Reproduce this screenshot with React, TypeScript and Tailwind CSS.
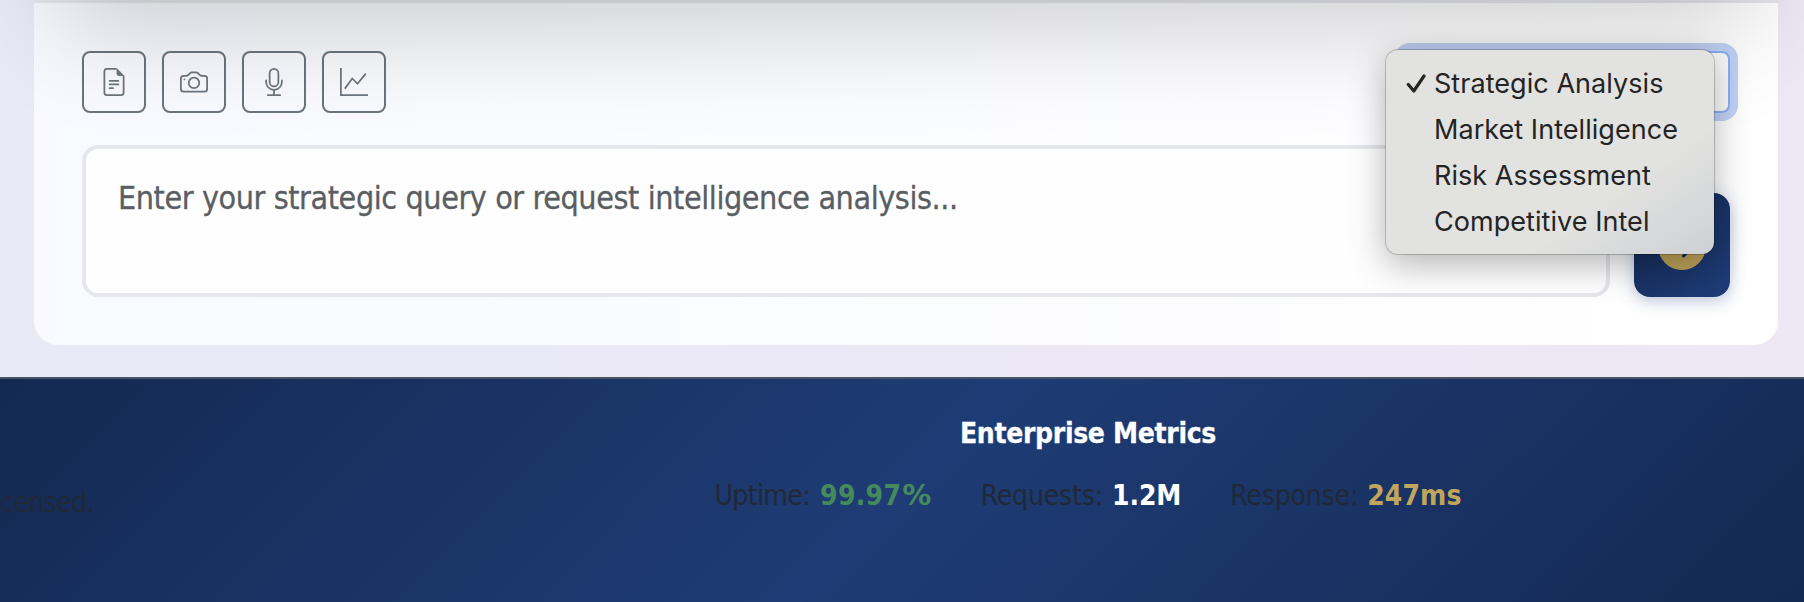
import React from "react";
import { BsCamera, BsMic, BsGraphUp } from "react-icons/bs";

const FileIcon = () => (
  <svg width="28" height="28" viewBox="0 0 16 16" fill="currentColor">
    <path fillRule="evenodd" d="M4 0h5.5v1H4a1 1 0 0 0-1 1v12a1 1 0 0 0 1 1h8a1 1 0 0 0 1-1V4.5h1V14a2 2 0 0 1-2 2H4a2 2 0 0 1-2-2V2a2 2 0 0 1 2-2z" />
    <path d="M9.5 3V0L14 4.5h-3A1.5 1.5 0 0 1 9.5 3z" />
    <path d="M5 11.500a.5.5 0 0 1 .5-.5h2a.5.5 0 0 1 0 1h-2a.5.5 0 0 1-.5-.5zm0-2.100a.5.5 0 0 1 .5-.5h5a.5.5 0 0 1 0 1h-5a.5.5 0 0 1-.5-.5zm0-2a.5.5 0 0 1 .5-.5h5a.5.5 0 0 1 0 1h-5a.5.5 0 0 1-.5-.5z" />
  </svg>
);

const tools = [
  { name: "document", icon: <FileIcon /> },
  { name: "camera", icon: <BsCamera size={28} /> },
  { name: "voice", icon: <BsMic size={28} /> },
  { name: "chart", icon: <BsGraphUp size={28} /> },
];

const options = ["Strategic Analysis", "Market Intelligence", "Risk Assessment", "Competitive Intel"];

export default function App() {
  return (
    <div className="relative flex h-[602px] w-[1804px] flex-col overflow-hidden bg-linear-to-r from-[#e8eaf6] to-[#eee7f4] font-['DejaVu_Sans_Condensed','DejaVu_Sans',sans-serif]">
      <main className="h-[377px] shrink-0 pr-[26px] pb-8 pl-[34px]">
        <section className="flex h-[345px] flex-col rounded-b-[24px] border-t-[3px] border-[#e5e7eb] bg-linear-to-r from-[#f9faff] to-white px-12 pt-12">
          <div className="flex justify-between">
            <div className="flex gap-4">
              {tools.map((t) => (
                <button key={t.name} className="flex h-[62px] w-16 items-center justify-center rounded-lg border-2 border-[#6c757d] text-[#6c757d]">
                  {t.icon}
                </button>
              ))}
            </div>
            <div className="h-[62px] w-[328px] rounded-lg border-2 border-[#8cb4f8] bg-white shadow-[0_0_0_8px_#c3d4f9]" />
          </div>
          <div className="mt-8 flex h-[152px] items-end gap-6">
            <div className="h-[152px] w-[1528px] rounded-2xl border-4 border-[#e5e7eb] bg-[#fefefe] px-8 pt-[29px] text-[32px] leading-[40px] tracking-[-0.42px] text-[#5a5e63] [-webkit-text-stroke:0.3px_#5a5e63]">
              <span className="whitespace-nowrap">Enter your strategic query or request intelligence analysis...</span>
            </div>
            <button className="flex h-[104px] w-24 items-center justify-center rounded-2xl bg-linear-135 from-[#142952] to-[#1e3d7a] pt-px shadow-[0_4px_16px_rgba(30,58,122,0.3)]">
              <span className="flex size-12 items-center justify-center rounded-full bg-[#bda258] text-[#142952]">
                <svg width="28" height="28" viewBox="0 0 28 28" fill="none" stroke="currentColor" strokeWidth="3" strokeLinecap="round" strokeLinejoin="round">
                  <path d="M3 14H25M15.500 4L25 14L15.500 24" />
                </svg>
              </span>
            </button>
          </div>
        </section>
      </main>
      <footer className="flex h-[225px] shrink-0 border-t-2 border-[#495464] bg-[linear-gradient(135deg,#142952_0%,#1e3c75_50%,#142952_100%)] text-[28px] leading-[40px] text-[#1f2937]">
        <p className="w-[713px] shrink-0 pt-[104px] tracking-[-0.5px]">censed.</p>
        <div className="flex w-[750px] flex-col items-center">
          <h2 className="mt-[35px] font-bold tracking-[-0.32px] text-white [-webkit-text-stroke:0.3px_white]">Enterprise Metrics</h2>
          <div className="mt-[22px] flex gap-[49px] tracking-[-0.15px] whitespace-nowrap">
            <div className="flex gap-[10px]">
              <span className="tracking-[-0.6px]">Uptime:</span>
              <b className="tracking-[0.3px] text-[#46895c]">99.97<span className="ml-px font-['DejaVu_Sans',sans-serif] text-[29px] leading-none">%</span></b>
            </div>
            <div className="flex gap-[9px]">
              <span>Requests:</span>
              <b className="text-white">1.2M</b>
            </div>
            <div className="flex gap-[9px]">
              <span>Response:</span>
              <b className="tracking-[0.1px] text-[#c0a55d]">247ms</b>
            </div>
          </div>
        </div>
      </footer>
      <div className="pointer-events-none absolute top-[-400px] left-[34px] h-[400px] w-[1744px] shadow-[0_53px_100px_-24px_rgba(0,0,0,0.19)]" />
      <ul className="absolute top-[50px] left-[1386px] h-[204px] w-[328px] rounded-xl bg-[#e2e2e0] bg-[linear-gradient(145deg,transparent_70%,#cdd0d4_100%)] pt-[11px] font-['Inter',sans-serif] text-[27px] tracking-[0.05px] text-[#242424] shadow-[0_0_0_1px_rgba(0,0,0,0.2),0_10px_36px_rgba(0,0,0,0.3)]">
        {options.map((label, i) => (
          <li key={label} className="flex h-[46px] items-center pl-[20px]">
            <span className="w-[28px]">
              {i === 0 && (
                <svg width="20" height="20" viewBox="0 0 20 20" fill="none" stroke="currentColor" strokeWidth="3.2" strokeLinecap="round" strokeLinejoin="round">
                  <path d="M2.300 10.500L7.800 17L18 2" />
                </svg>
              )}
            </span>
            <span className="whitespace-nowrap">{label}</span>
          </li>
        ))}
      </ul>
    </div>
  );
}
